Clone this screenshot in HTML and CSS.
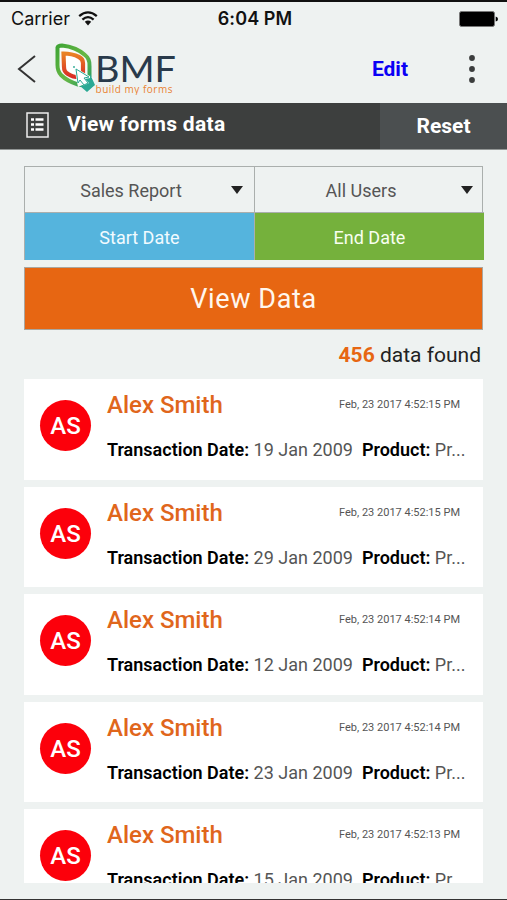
FILE: index.html
```html
<!DOCTYPE html>
<html lang="en">
<head>
<meta charset="utf-8">
<title>View forms data</title>
<link rel="stylesheet" href="styles.css">
</head>
<body>
<div class="screen">
  <div class="status">
    <div class="carrier"><span>Carrier</span>
      <svg width="20" height="15" viewBox="0 0 20 15" fill="none" stroke="#111" stroke-width="2.3"><path d="M1.2 5.2Q10-2.4 18.8 5.2M4.4 8.6Q10 3.6 15.6 8.6"/><path d="M6.8 10.8Q10 8 13.2 10.8L10 14.4Z" fill="#111" stroke="none"/></svg>
    </div>
    <span class="time">6:04 PM</span>
    <svg class="battery" width="40" height="16" viewBox="0 0 40 16"><rect x=".5" y=".5" width="35" height="15" rx="2" fill="#000" stroke="#777"/><path d="M36.7 5.5Q39 6 39 8T36.7 10.5Z"/></svg>
  </div>
  <header class="nav">
    <svg class="back" width="20" height="28" viewBox="0 0 20 28" fill="none" stroke="#333" stroke-width="2"><path d="M18 1L2 14L18 27"/></svg>
    <svg class="logo" width="122" height="52" viewBox="0 0 122 52">
      <defs>
        <linearGradient id="leaf" x1="0" y1="0" x2="1" y2="1"><stop offset="0" stop-color="#3fa535"/><stop offset=".55" stop-color="#69b845"/><stop offset="1" stop-color="#249b62"/></linearGradient>
        <linearGradient id="fire" x1="0" y1="0" x2="0" y2="1"><stop offset="0" stop-color="#e98225"/><stop offset="1" stop-color="#d92c25"/></linearGradient>
      </defs>
      <path d="M3.5 4.5Q4 2.500 8 2.500Q22 4 31 12Q36 16 35.500 23V40Q31 43 24 41.500Q13 38 7 32Q3.500 28 3.500 22Z" fill="#f8fbfa" stroke="url(#leaf)" stroke-width="4"/>
      <path d="M9.500 10.500Q18 10.500 25 14Q29 16 29 20V34Q20 35 14 31Q10 29 10 24Z" fill="#fff" stroke="url(#fire)" stroke-width="4.200"/>
      <path d="M20 24L41 36L37 38L40 44L34 48L29 42L24 44Z" fill="#f8fbfa"/>
      <path d="M22 26L35 34L30 35L34 40L30 42L26 37L24 40Z" fill="#fff" stroke="#2ba994" stroke-width="1"/>
      <path d="M36 31L41 42L33 49L26 43L31 42L35 40L31 36L36 35Z" fill="#2ba994"/>
      <circle cx="20" cy="24" r=".9" fill="#2ba994"/>
      <text class="brand" x="41" y="38.500" textLength="81" lengthAdjust="spacingAndGlyphs">BMF</text>
      <text class="tagline" x="41.500" y="49.500" textLength="77">build my forms</text>
    </svg>
    <a class="edit">Edit</a>
    <svg class="more" width="6" height="28" viewBox="0 0 6 28" fill="#3b3d3d"><circle cx="3" cy="3" r="2.900"/><circle cx="3" cy="14" r="2.900"/><circle cx="3" cy="25" r="2.900"/></svg>
  </header>
  <div class="titlebar">
    <svg class="list-icon" width="23" height="26" viewBox="0 0 23 26" fill="none" stroke="#eee"><rect x="1" y="1" width="21" height="24" stroke-width="1.500"/><path d="M5 7.500h3M9.500 7.500h8M5 12.500h3M9.500 12.500h8M5 17.500h3M9.500 17.500h8" stroke="#fff" stroke-width="2.600"/></svg>
    <h1>View forms data</h1>
    <div class="reset">Reset</div>
  </div>
  <main>
    <div class="filters">
      <div class="cell select"><span class="w-sales">Sales Report</span><i></i></div>
      <div class="cell select"><span class="w-users">All Users</span><i></i></div>
      <div class="cell start">Start Date</div>
      <div class="cell end">End Date</div>
    </div>
    <div class="view">View Data</div>
    <div class="found"><b>456</b> data found</div>
    <div class="list">
      <article class="card"><div class="avatar">AS</div><div class="info"><div class="top"><h2>Alex Smith</h2><time>Feb, 23 2017 4:52:15 PM</time></div><p><b>Transaction Date:</b> <span>19 Jan 2009</span><b class="product">Product:</b> Pr...</p></div></article>
      <article class="card"><div class="avatar">AS</div><div class="info"><div class="top"><h2>Alex Smith</h2><time>Feb, 23 2017 4:52:15 PM</time></div><p><b>Transaction Date:</b> <span>29 Jan 2009</span><b class="product">Product:</b> Pr...</p></div></article>
      <article class="card"><div class="avatar">AS</div><div class="info"><div class="top"><h2>Alex Smith</h2><time>Feb, 23 2017 4:52:14 PM</time></div><p><b>Transaction Date:</b> <span>12 Jan 2009</span><b class="product">Product:</b> Pr...</p></div></article>
      <article class="card"><div class="avatar">AS</div><div class="info"><div class="top"><h2>Alex Smith</h2><time>Feb, 23 2017 4:52:14 PM</time></div><p><b>Transaction Date:</b> <span>23 Jan 2009</span><b class="product">Product:</b> Pr...</p></div></article>
      <article class="card"><div class="avatar">AS</div><div class="info"><div class="top"><h2>Alex Smith</h2><time>Feb, 23 2017 4:52:13 PM</time></div><p><b>Transaction Date:</b> <span>15 Jan 2009</span><b class="product">Product:</b> Pr...</p></div></article>
    </div>
  </main>
</div>
</body>
</html>
```
FILE: styles.css
```css
* { box-sizing: border-box; }
body { margin: 0; font-family: Roboto, sans-serif; background: #eef2f1; }
h1, h2, p { margin: 0; }
svg { display: block; flex: none; }
.screen { width: 507px; height: 900px; overflow: hidden; border-top: 2px solid #111; border-bottom: 1px solid #333; display: flex; flex-direction: column; }
.status { height: 33px; flex: none; display: grid; grid-template-columns: 1fr auto 1fr; align-items: center; padding: 0 8px 0 11px; font-family: Inter, sans-serif; font-size: 18px; color: #111; }
.carrier { display: flex; align-items: center; gap: 8px; }
.time { font-weight: 600; letter-spacing: .1px; }
.battery { justify-self: end; }
.nav { height: 68px; flex: none; display: flex; align-items: center; padding: 0 32px 0 17px; }
.logo { margin-left: 17px; }
.brand { font-family: Lato, sans-serif; font-size: 36px; fill: #293a4b; }
.tagline { font-family: "Open Sans", sans-serif; font-size: 10px; fill: #e98231; }
.edit { margin-left: auto; font-size: 21px; font-weight: 700; color: #0b00f5; }
.more { margin-left: 61px; }
.titlebar { height: 47px; flex: none; display: flex; align-items: stretch; background: #3d3f3e; border-bottom: 1px solid #929695; color: #fff; font-size: 21px; font-weight: 700; }
.list-icon { margin: 9px 0 0 26px; }
h1 { margin-left: 18px; font-size: 21px; line-height: 43px; letter-spacing: .3px; }
.reset { margin-left: auto; width: 127px; background: #4b4f50; text-align: center; line-height: 47px; }
main { padding: 16px 24px 0; display: flex; flex-direction: column; }
.filters { display: grid; grid-template-columns: 230px 229px; grid-template-rows: 46px 47px; border: 1px solid #aaafad; width: 459px; height: 94px; }
.cell { display: flex; align-items: center; justify-content: center; font-size: 18px; color: #555; border-right: 1px solid #aaafad; padding-top: 2px; }
.cell:nth-child(even) { border-right: 0; }
.select { border-bottom: 1px solid #aaafad; position: relative; }
.select span { margin-right: 17px; }
.select i { position: absolute; right: 11px; top: 19px; border: 6.500px solid transparent; border-top: 8px solid #222; border-bottom: 0; }
.start { background: #55b4dd; color: #f2fbff; }
.end { background: #75b13c; color: #f8fff0; }
.view { margin-top: 7px; height: 63px; border: 1px solid #aaa69f; background: #e76612; color: #fff6ed; font-size: 27px; line-height: 63px; text-align: center; letter-spacing: .6px; }
.found { height: 49px; line-height: 51px; text-align: right; padding-right: 2px; font-size: 21px; color: #222; }
.found b { color: #e76612; }
.list { height: 504px; overflow: hidden; display: flex; flex-direction: column; gap: 7px; }
.card { height: 100.500px; flex: none; background: #fff; display: flex; padding-left: 16px; }
.avatar { width: 51px; height: 51px; margin-top: 21px; border-radius: 50%; background: #fc000b; color: #fff; font-size: 24px; font-weight: 500; line-height: 53px; text-align: center; flex: none; }
.info { margin-left: 16px; flex: 1; }
.top { display: flex; justify-content: space-between; padding-right: 23px; height: 51px; line-height: 52px; }
h2 { font-size: 24px; font-weight: 500; color: #e0661c; }
time { font-size: 11px; color: #555; }
p { font-size: 18px; line-height: 40px; color: #555; white-space: nowrap; }
p b { color: #000; font-weight: 600; }
.product { margin-left: 9px; }
```
